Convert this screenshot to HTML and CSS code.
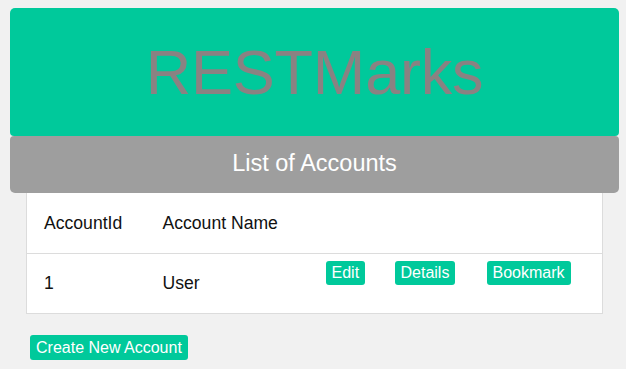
FILE: index.html
```html
<!DOCTYPE html>
<html lang="en">
<head>
<meta charset="UTF-8">
<meta name="viewport" content="width=device-width, initial-scale=1.0">
<title>RESTMarks</title>
<link rel="stylesheet" href="styles.css">
</head>
<body>
<div class="page">
  <header class="banner">
    <h1 class="brand">RESTMarks</h1>
  </header>
  <div class="subtitle">List of Accounts</div>
  <div class="content">
    <table class="accounts">
      <colgroup>
        <col class="c-id">
        <col class="c-name">
        <col class="c-edit">
        <col class="c-details">
        <col>
      </colgroup>
      <thead>
        <tr>
          <th>AccountId</th>
          <th>Account Name</th>
          <th></th>
          <th></th>
          <th></th>
        </tr>
      </thead>
      <tbody>
        <tr>
          <td>1</td>
          <td>User</td>
          <td class="action"><a class="btn" href="#">Edit</a></td>
          <td class="action"><a class="btn" href="#">Details</a></td>
          <td class="action"><a class="btn" href="#">Bookmark</a></td>
        </tr>
      </tbody>
    </table>
    <a class="btn create" href="#">Create New Account</a>
  </div>
</div>
</body>
</html>
```

FILE: styles.css
```css
body {
  margin: 0;
  background-color: #f1f1f1;
  font-family: "Liberation Sans", Arial, sans-serif;
  color: #111;
}
.page {
  padding: 8px 7px 8px 10px;
}
.banner {
  background-color: #00c99b;
  border-radius: 5px 5px 4px 4px;
  height: 128px;
  display: flex;
  align-items: center;
  justify-content: center;
}
.brand {
  margin: 0;
  font-weight: normal;
  font-size: 63px;
  color: #8a8282;
  letter-spacing: -0.2px;
}
.subtitle {
  background-color: #9e9e9e;
  border-radius: 4px 4px 5px 5px;
  height: 57px;
  line-height: 55px;
  text-align: center;
  color: #fff;
  font-size: 23.5px;
}
.content {
  padding: 0 16px;
}
.accounts {
  width: 100%;
  table-layout: fixed;
  border-collapse: collapse;
  background-color: #fff;
  border: 1px solid #dcdcdc;
  border-top: none;
  font-size: 17.6px;
}
.c-id { width: 119px; }
.c-name { width: 163px; }
.c-edit { width: 69px; }
.c-details { width: 92px; }
.accounts th {
  font-weight: normal;
  text-align: left;
  height: 60px;
  padding: 0 0 0 17px;
  border-bottom: 1px solid #dcdcdc;
}
.accounts td {
  height: 59px;
  padding: 0 0 0 17px;
  vertical-align: middle;
}
.accounts td.action {
  vertical-align: top;
  padding-top: 7px;
  height: 52px;
}
.btn {
  display: inline-block;
  background-color: #00c99b;
  color: #fff;
  text-decoration: none;
  font-size: 16px;
  line-height: 24px;
  padding: 0 6px;
  border-radius: 3px;
}
.create {
  margin: 21px 0 0 4px;
  line-height: 25px;
}
```
